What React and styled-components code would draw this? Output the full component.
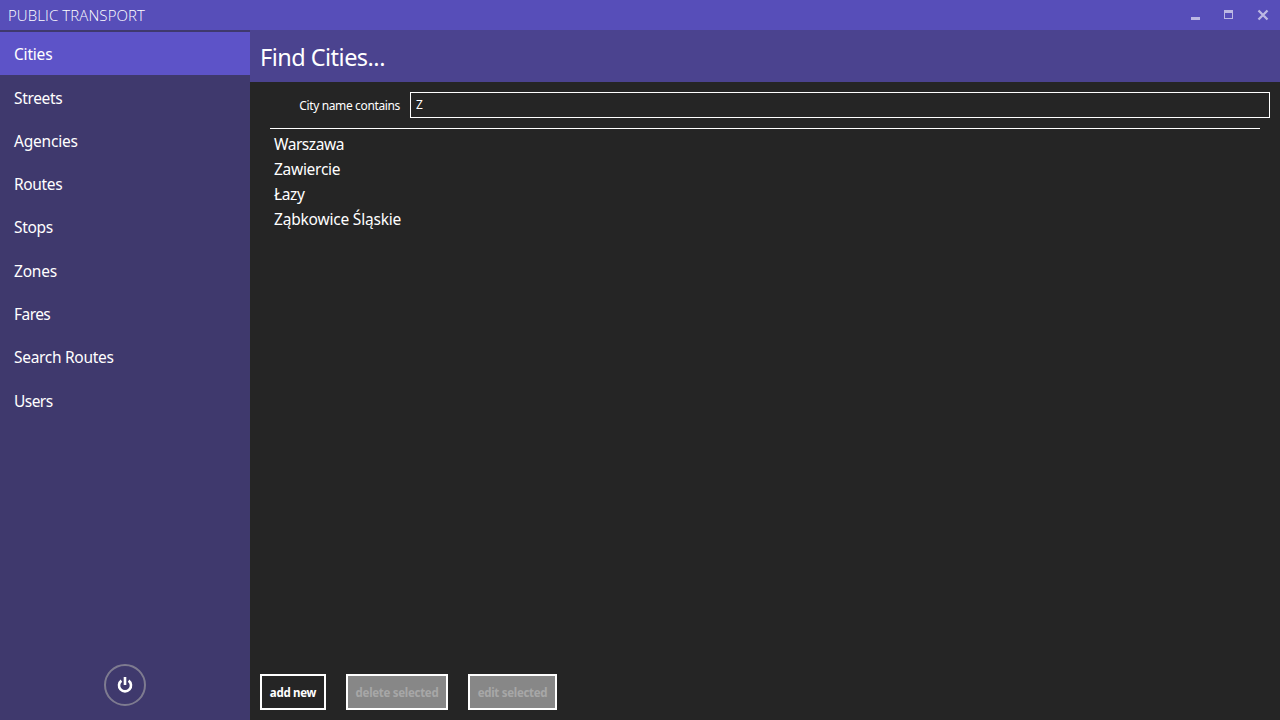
import React from "react";
import styled, { createGlobalStyle } from "styled-components";

const GlobalStyle = createGlobalStyle`
  *, *::before, *::after { box-sizing: border-box; }
  body {
    margin: 0;
    background: #252525;
    color: #fff;
    font-family: "Segoe UI", "Noto Sans", sans-serif;
    overflow: hidden;
  }
`;

const Window = styled.div`
  display: flex;
  flex-direction: column;
  width: 1280px;
  height: 720px;
  background: #252525;
`;

const TitleBar = styled.header`
  display: flex;
  justify-content: space-between;
  flex: none;
  height: 30px;
  padding: 0 11px 0 8px;
  background: #574eb9;
`;

const AppTitle = styled.span`
  font-family: "Segoe UI", "Open Sans", sans-serif;
  font-size: 15px;
  font-weight: 350;
  line-height: 31px;
  letter-spacing: 0.1px;
`;

const WindowControls = styled.div`
  display: flex;
  gap: 22px;
  padding-top: 9px;
`;

const ControlButton = styled.button`
  display: block;
  width: ${(p) => p.$width}px;
  height: 12px;
  padding: 0;
  border: 0;
  background: none;
  color: #bcb8e3;
  svg { display: block; }
`;

const Body = styled.div`
  display: flex;
  flex: 1;
  min-height: 0;
`;

const Sidebar = styled.nav`
  display: flex;
  flex-direction: column;
  justify-content: space-between;
  align-items: center;
  width: 250px;
  padding: 2px 0 14px;
  background: #3f396d;
`;

const Menu = styled.ul`
  width: 100%;
  margin: 0;
  padding: 0;
  list-style: none;
`;

const MenuItem = styled.li`
  height: 43.33px;
  padding-left: 14px;
  background: ${(p) => (p.$active ? "#5d53c8" : "transparent")};
  font-size: 15.5px;
  line-height: ${(p) => p.$line || 45}px;
  letter-spacing: ${(p) => p.$tracking || 0}px;
`;

const PowerButton = styled.button`
  display: flex;
  align-items: center;
  justify-content: center;
  width: 42px;
  height: 42px;
  padding: 0;
  border: 2px solid #7e7b90;
  border-radius: 50%;
  background: none;
  color: #fff;
`;

const Main = styled.main`
  display: flex;
  flex-direction: column;
  flex: 1;
`;

const PageTitle = styled.h1`
  height: 52px;
  margin: 0;
  padding-left: 10px;
  background: #4b438f;
  font-size: 23.5px;
  font-weight: 400;
  line-height: 54px;
  letter-spacing: -0.52px;
`;

const SearchRow = styled.label`
  display: flex;
  gap: 10px;
  padding: 10px 10px 10px 0;
`;

const SearchLabel = styled.span`
  width: 150px;
  padding-top: 1px;
  font-size: 12px;
  line-height: 25px;
  letter-spacing: -0.36px;
  text-align: right;
`;

const SearchInput = styled.input`
  flex: 1;
  height: 26px;
  padding: 0 5px 2px;
  border: 1px solid #fff;
  border-radius: 0;
  outline: 0;
  background: transparent;
  color: #fff;
  font: 12px "Segoe UI", "Noto Sans", sans-serif;
`;

const Results = styled.ul`
  flex: 1;
  margin: 0 20px;
  padding: 3px 4px;
  border-top: 1px solid #fff;
  list-style: none;
`;

const ResultItem = styled.li`
  height: 25px;
  font-size: 15.5px;
  line-height: 25px;
  letter-spacing: ${(p) => p.$tracking || 0}px;
`;

const Actions = styled.footer`
  display: flex;
  gap: 20px;
  padding: 10px;
`;

const ActionButton = styled.button`
  width: ${(p) => p.$width}px;
  height: 36px;
  padding: 0;
  border: 2px solid #fff;
  background: transparent;
  color: #fff;
  font: 700 11.5px "Segoe UI", "Noto Sans", sans-serif;
  letter-spacing: -0.3px;
  white-space: nowrap;
  &:disabled {
    background: #878787;
    color: #a7a7a7;
  }
`;

const menu = [
  { label: "Cities", tracking: -0.2 },
  { label: "Streets", tracking: -0.35, line: 47 },
  { label: "Agencies", tracking: -0.2 },
  { label: "Routes", tracking: -0.35 },
  { label: "Stops", tracking: -0.3 },
  { label: "Zones", tracking: -0.2 },
  { label: "Fares", tracking: -0.55 },
  { label: "Search Routes", tracking: -0.3 },
  { label: "Users", tracking: -0.55 },
];

const cities = [
  { name: "Warszawa", tracking: -0.45 },
  { name: "Zawiercie", tracking: -0.28 },
  { name: "Łazy", tracking: -0.35 },
  { name: "Ząbkowice Śląskie", tracking: -0.2 },
];

export default function App() {
  return (
    <>
      <GlobalStyle />
      <Window>
        <TitleBar>
          <AppTitle>PUBLIC TRANSPORT</AppTitle>
          <WindowControls>
            <ControlButton $width={11} aria-label="Minimize">
              <svg width="11" height="12" fill="currentColor"><path d="M0 8h9v3H0z" /></svg>
            </ControlButton>
            <ControlButton $width={11} aria-label="Maximize">
              <svg width="11" height="12" fill="currentColor" fillRule="evenodd"><path d="M0 1h9v9H0zM1 4v5h7V4z" /></svg>
            </ControlButton>
            <ControlButton $width={12} aria-label="Close">
              <svg width="12" height="12" fill="none" stroke="currentColor" strokeWidth="2.3"><path d="M1.5 1.5 10.5 10.5M10.5 1.5 1.5 10.5" /></svg>
            </ControlButton>
          </WindowControls>
        </TitleBar>
        <Body>
          <Sidebar>
            <Menu>
              {menu.map(({ label, tracking, line }, i) => (
                <MenuItem key={label} $active={i === 0} $tracking={tracking} $line={line}>{label}</MenuItem>
              ))}
            </Menu>
            <PowerButton aria-label="Power">
              <svg width="18" height="18" fill="none" stroke="currentColor" strokeWidth="2.6">
                <path d="M5.4 4.6A6 6 0 1 0 12.6 4.6M9 0.9V9" />
              </svg>
            </PowerButton>
          </Sidebar>
          <Main>
            <PageTitle>Find Cities...</PageTitle>
            <SearchRow>
              <SearchLabel>City name contains</SearchLabel>
              <SearchInput defaultValue="Z" />
            </SearchRow>
            <Results>
              {cities.map(({ name, tracking }) => (
                <ResultItem key={name} $tracking={tracking}>{name}</ResultItem>
              ))}
            </Results>
            <Actions>
              <ActionButton $width={66}>add new</ActionButton>
              <ActionButton $width={102} disabled>delete selected</ActionButton>
              <ActionButton $width={89} disabled>edit selected</ActionButton>
            </Actions>
          </Main>
        </Body>
      </Window>
    </>
  );
}
